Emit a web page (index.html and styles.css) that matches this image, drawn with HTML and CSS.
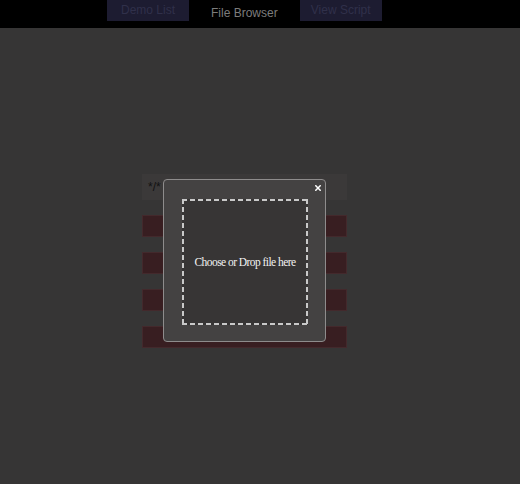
FILE: index.html
```html
<!DOCTYPE html>
<html>
<head>
<meta charset="utf-8">
<link rel="stylesheet" href="styles.css">
</head>
<body>
<div class="topbar">
  <div class="btn">Demo List</div>
  <div class="title">File Browser</div>
  <div class="btn">View Script</div>
</div>
<div class="content">
  <div class="filter">*/*</div>
  <div class="row"></div>
  <div class="row"></div>
  <div class="row"></div>
  <div class="row"></div>
</div>
<div class="modal">
  <div class="close">
    <svg width="6" height="6" viewBox="0 0 6 6"><path d="M0.8 0.8L5.2 5.2M5.2 0.8L0.8 5.2" stroke="#ffffff" stroke-width="1.5" stroke-linecap="square"/></svg>
  </div>
  <div class="drop">Choose or Drop file here</div>
</div>
</body>
</html>
```
FILE: styles.css
```css
html, body {
  margin: 0;
  padding: 0;
  background: #363535;
  height: 100%;
  font-family: "Liberation Sans", Arial, sans-serif;
}
.topbar {
  height: 28px;
  background: #000;
  display: flex;
  align-items: flex-start;
  gap: 22px;
  padding-left: 107px;
}
.btn {
  width: 82px;
  height: 21px;
  background: #1d1c31;
  color: #30304a;
  font-size: 12px;
  line-height: 21px;
  text-align: center;
}
.title {
  color: #7c7c7c;
  font-size: 12px;
  line-height: 26px;
}
.content {
  display: flex;
  flex-direction: column;
  gap: 15px;
  width: 205px;
  margin-left: 142px;
  margin-top: 146px;
}
.filter {
  height: 26px;
  background: #3b3939;
  color: #121212;
  font-size: 12px;
  line-height: 26px;
  padding-left: 6px;
}
.row {
  height: 22px;
  box-sizing: border-box;
  background: #381e21;
  border: 1px solid #43292c;
}
.modal {
  position: absolute;
  left: 163px;
  top: 179px;
  width: 163px;
  height: 163px;
  box-sizing: border-box;
  background: #444242;
  border: 1px solid #8e8c8c;
  border-radius: 4px;
  padding: 19px 17px 16px 18px;
}
.close {
  position: absolute;
  right: 4px;
  top: 5px;
  width: 6px;
  height: 6px;
  display: flex;
}
.drop {
  width: 126px;
  height: 126px;
  box-sizing: border-box;
  background:
    repeating-linear-gradient(90deg, #c9c9c9 0 5px, transparent 5px 8px) left top / 100% 2px no-repeat,
    repeating-linear-gradient(90deg, #c9c9c9 0 5px, transparent 5px 8px) left bottom / 100% 2px no-repeat,
    repeating-linear-gradient(180deg, #c9c9c9 0 5px, transparent 5px 8px) left top / 2px 100% no-repeat,
    repeating-linear-gradient(180deg, #c9c9c9 0 5px, transparent 5px 8px) right top / 2px 100% no-repeat,
    #373535;
  display: flex;
  align-items: center;
  justify-content: center;
  color: #f2f2f2;
  font-family: "Liberation Serif", "Times New Roman", serif;
  font-size: 11.5px;
  letter-spacing: -0.55px;
}
```
